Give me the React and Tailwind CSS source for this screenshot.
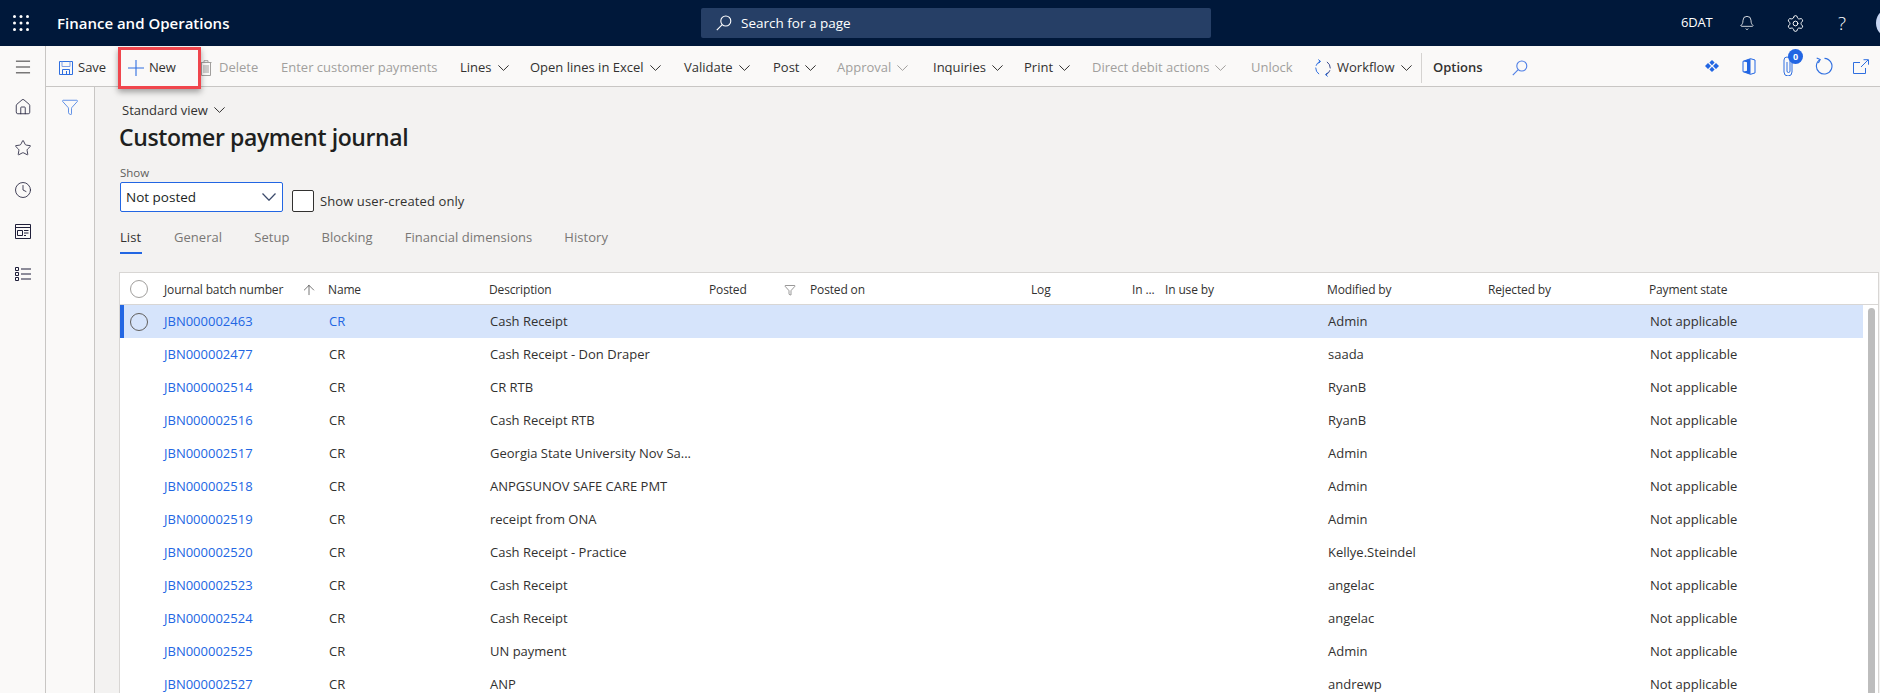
import React from "react";
import { Bell, Settings, Home, Star, Clock, Funnel, ArrowUp, Menu } from "lucide-react";

const Chev = ({ c = "#323130", w = 11, h = 6 }) => (
  <svg width={w} height={h} viewBox="0 0 11 6" fill="none" stroke={c} strokeWidth="1" preserveAspectRatio="none" className="ml-[6px] shrink-0">
    <path d="M.4.4 5.5 5.4 10.6.4" />
  </svg>
);

const SaveIcon = () => (
  <svg width="16" height="16" viewBox="0 0 16 16" fill="none" stroke="#2f6fe0" strokeWidth="1">
    <path d="M1.5 1.5h13v13h-13z" />
    <path d="M4 1.5v5h8v-5" stroke="#7f9fe6" />
    <path d="M4.5 14.5v-5h7v5M8.5 11v3.5" />
  </svg>
);
const TrashIcon = () => (
  <svg width="12" height="16" viewBox="0 0 12 16" fill="none" stroke="#a19f9d" strokeWidth="1">
    <path d="M.5 2.5h11M4 2.5V.7h4v1.8M1.5 2.5v13h9v-13M4 5v8M6 5v8M8 5v8" />
  </svg>
);
const WorkflowIcon = () => (
  <svg width="18" height="18" viewBox="0 0 18 18" fill="none" stroke="#2f6fe0" strokeWidth="1" strokeLinecap="round">
    <path d="M5.6 2.4A7.3 7.3 0 0 0 2.2 6.4M1.7 9a7.3 7.3 0 0 0 3 5.9" />
    <path d="M12.4 15.6a7.3 7.3 0 0 0 3.4-4M16.3 9a7.3 7.3 0 0 0-3-5.9" stroke="#3a4a8c" />
    <path d="M4.6.8 6.6 2.4 4.8 4.2M13.4 17.2l-2-1.6 1.8-1.8" />
  </svg>
);
const PanelIcon = () => (
  <svg width="16" height="15" viewBox="0 0 16 15" fill="none" stroke="#1f1f3a" strokeWidth="1">
    <path d="M.5.5h15v14H.5zM.5 3.5h15M2.5 6.5h5v5h-5zM9 6.5h4.5M9 9h4.5M9 11.5h2" />
  </svg>
);
const ListIcon = () => (
  <svg width="16" height="16" viewBox="0 0 16 16" fill="none" stroke="#1f1f3a" strokeWidth="1">
    <path d="M.5 1.5h3v3h-3zM.5 6.5h3v3h-3zM.5 11.5h3v3h-3zM6 3h10M6 8h10M6 13h10" />
  </svg>
);
const DotsIcon = () => (
  <svg width="16" height="16" viewBox="0 0 16 16" fill="#fff">
    {[1.5, 8, 14.5].flatMap((y) => [1.5, 8, 14.5].map((x) => <circle key={`${x}-${y}`} cx={x} cy={y} r="1.5" />))}
  </svg>
);
const SearchFlip = ({ c = "#fff", s = 16 }) => (
  <svg width={s} height={s} viewBox="0 0 16 16" fill="none" stroke={c} strokeWidth="1.1">
    <circle cx="9.8" cy="6" r="5" />
    <path d="M6.2 9.6.8 15.2" />
  </svg>
);
const Diamonds = () => (
  <svg width="14" height="12" viewBox="0 0 14 12" fill="#2266e3">
    <path d="M3 3l3 3-3 3-3-3zM11 3l3 3-3 3-3-3zM7 0l2.6 2.6L7 5.2 4.4 2.6zM7 6.8l2.6 2.6L7 12 4.4 9.4z" />
  </svg>
);
const OfficeIcon = () => (
  <svg width="14" height="17" viewBox="0 0 14 17" fill="none">
    <path d="M8.5.7 1 3.3v10.4l7.5 2.6 4.5-1.4V2z" stroke="#2266e3" />
    <path d="M8.5.7v15.6L1 13.7 5 12.7V4.3L1 3.3z" fill="#2266e3" />
  </svg>
);
const ClipIcon = () => (
  <svg width="10" height="20" viewBox="0 0 10 20" fill="none" stroke="#2f6fe0" strokeWidth="1">
    <path d="M9 5v11a4 4 0 0 1-8 0V4a3 3 0 0 1 6 0v11a1.5 1.5 0 0 1-3 0V6" />
  </svg>
);
const RefreshIcon = () => (
  <svg width="18" height="18" viewBox="0 0 18 18" fill="none" stroke="#2f6fe0" strokeWidth="1.1">
    <path d="M5 2.6A7.8 7.8 0 1 0 9.5 1.4" />
    <path d="M1.7 .9 5.2 2.6 3.4 6" />
  </svg>
);
const OpenIcon = () => (
  <svg width="16" height="15" viewBox="0 0 16 15" fill="none" stroke="#2f6fe0" strokeWidth="1">
    <path d="M7 3.5H.5v11h12V9M8 8l7-7M10.5.7h5v5" />
  </svg>
);
const NewPlus = () => (
  <svg width="16" height="16" viewBox="0 0 16 16" stroke="#2f6fe0" strokeWidth="1.1">
    <path d="M8 0v16M0 8h16" />
  </svg>
);

const Tool = ({ w, dis, children }) => (
  <div className={`${w} flex items-center shrink-0 whitespace-nowrap ${dis ? "text-[#a19f9d]" : "text-[#323130]"}`}>{children}</div>
);

const rows = [
  ["JBN000002463", "Cash Receipt", "Admin"],
  ["JBN000002477", "Cash Receipt - Don Draper", "saada"],
  ["JBN000002514", "CR RTB", "RyanB"],
  ["JBN000002516", "Cash Receipt RTB", "RyanB"],
  ["JBN000002517", "Georgia State University Nov Sa...", "Admin"],
  ["JBN000002518", "ANPGSUNOV SAFE CARE PMT", "Admin"],
  ["JBN000002519", "receipt from ONA", "Admin"],
  ["JBN000002520", "Cash Receipt - Practice", "Kellye.Steindel"],
  ["JBN000002523", "Cash Receipt", "angelac"],
  ["JBN000002524", "Cash Receipt", "angelac"],
  ["JBN000002525", "UN payment", "Admin"],
  ["JBN000002527", "ANP", "andrewp"],
];

const cols = "grid grid-cols-[44px_164px_161px_220px_101px_221px_101px_33px_162px_161px_161px_1fr]";

export default function App() {
  return (
    <div className="h-[693px] w-[1880px] overflow-hidden flex flex-col bg-[#f3f2f1] font-['Open_Sans','Noto_Sans',sans-serif] text-[13px] text-[#323130]">
      <header className="h-[46px] shrink-0 bg-[#00183a] flex items-center text-white overflow-hidden">
        <div className="w-[57px] pl-[13px] flex items-center shrink-0"><DotsIcon /></div>
        <div className="w-[644px] shrink-0 text-[15px] font-semibold">Finance and Operations</div>
        <div className="w-[510px] shrink-0 h-[30px] rounded-[2px] bg-[#263f66] flex items-center pl-[15px] gap-[9px] text-[13.5px]">
          <SearchFlip />
          <span>Search for a page</span>
        </div>
        <div className="ml-[470px] w-[58px] shrink-0 text-[13px] tracking-[-0.2px]">6DAT</div>
        <Bell size={16} strokeWidth={1.2} className="shrink-0" />
        <Settings size={19} strokeWidth={1.2} className="ml-[31px] shrink-0" />
        <span className="ml-[33px] text-[19px] font-light leading-none w-[10px] shrink-0">?</span>
        <div className="ml-[28px] w-[30px] h-[30px] rounded-full bg-[#c7d6f2] shrink-0" />
      </header>

      <div className="flex-1 flex min-h-0">
        <nav className="w-[46px] shrink-0 bg-[#faf9f8] border-r border-[#c8c6c4] flex flex-col items-center">
          <Menu size={20} strokeWidth={1} color="#111" className="mt-[11px]" />
          <Home size={18} strokeWidth={1.1} color="#1f1f3a" className="mt-[21px]" />
          <Star size={18} strokeWidth={1.1} color="#1f1f3a" className="mt-[23px]" />
          <Clock size={18} strokeWidth={1.1} color="#1f1f3a" className="mt-[24px]" />
          <div className="mt-[25px] flex"><PanelIcon /></div>
          <div className="mt-[27px] flex"><ListIcon /></div>
        </nav>

        <div className="flex-1 flex flex-col min-w-0">
          <div className="h-[41px] shrink-0 bg-[#faf9f8] border-b border-[#c8c6c4] flex items-center pl-[12px] pt-[3px] text-[13px]">
            <Tool w="w-[70px]"><SaveIcon /><span className="ml-[4px]">Save</span></Tool>
            <Tool w="w-[72px]">
              <div className="relative flex items-center">
                <NewPlus /><span className="ml-[5px] tracking-[-0.2px]">New</span>
                <div className="absolute left-[-10px] top-[-11px] w-[83px] h-[42px] border-[3px] border-[#f0464d] shadow-[0_3px_6px_rgba(0,0,0,0.35)]" />
              </div>
            </Tool>
            <Tool w="w-[81px]" dis><TrashIcon /><span className="ml-[7px]">Delete</span></Tool>
            <Tool w="w-[179px]" dis>Enter customer payments</Tool>
            <Tool w="w-[70px]">Lines<Chev /></Tool>
            <Tool w="w-[154px]">Open lines in Excel<Chev /></Tool>
            <Tool w="w-[89px]">Validate<Chev /></Tool>
            <Tool w="w-[64px]">Post<Chev /></Tool>
            <Tool w="w-[96px]" dis>Approval<Chev c="#a19f9d" /></Tool>
            <Tool w="w-[91px]">Inquiries<Chev /></Tool>
            <Tool w="w-[68px]">Print<Chev /></Tool>
            <Tool w="w-[159px]" dis>Direct debit actions<Chev c="#a19f9d" /></Tool>
            <Tool w="w-[63px]" dis>Unlock</Tool>
            <Tool w="w-[107px]"><WorkflowIcon /><span className="ml-[5px]">Workflow</span><Chev /></Tool>
            <div className="w-px h-[30px] bg-[#d5d3d1] shrink-0" />
            <div className="ml-[11px] w-[79px] font-semibold shrink-0">Options</div>
            <SearchFlip c="#4f7fe6" />
            <div className="ml-auto flex items-center pr-[11px] -mt-[3px]">
              <Diamonds />
              <div className="ml-[23px] flex"><OfficeIcon /></div>
              <div className="ml-[27px] relative flex w-[10px]">
                <ClipIcon />
                <div className="absolute left-[5px] top-[-7px] w-[15px] h-[15px] rounded-full bg-[#2266e3] text-white text-[9px] font-bold flex items-center justify-center">0</div>
              </div>
              <div className="ml-[22px] flex"><RefreshIcon /></div>
              <div className="ml-[20px] flex"><OpenIcon /></div>
            </div>
          </div>

          <div className="flex-1 flex min-h-0">
            <div className="w-[49px] shrink-0 bg-[#faf9f8] border-r border-[#c8c6c4] flex justify-center pt-[11px]">
              <Funnel size={18} strokeWidth={1} color="#2f6fe0" />
            </div>
            <main className="flex-1 min-w-0 pl-[24px]">
              <div className="h-[36px] pt-[10px] pl-[3px] flex items-center text-[13px] leading-[18px]">
                <span>Standard view</span><Chev />
              </div>
              <h1 className="h-[43px] text-[23px] leading-[30px] font-semibold tracking-[-0.4px] text-[#201f1e] -mt-[1px]">Customer payment journal</h1>
              <div className="h-[15px] pl-[1px] text-[11.5px] leading-[15px] text-[#605e5c]">Show</div>
              <div className="flex items-start mt-[2px] pl-[1px]">
                <div className="w-[163px] h-[30px] bg-white border border-[#2266e3] rounded-[2px] flex items-center pl-[5px] pr-[6px] justify-between text-[13.5px] text-[#201f1e]">
                  <span>Not posted</span><Chev c="#3b4a6b" w={14} h={8} />
                </div>
                <div className="ml-[9px] mt-[8px] w-[22px] h-[22px] bg-white border border-[#323130] rounded-[2px]" />
                <div className="ml-[6px] mt-[10px] text-[13px] leading-[18px] tracking-[0.1px]">Show user-created only</div>
              </div>
              <div className="flex mt-[16px] h-[26px] text-[13px] tracking-[0.05px] text-[#797775] pl-[1px] gap-[32px]">
                <div className="text-[#323130] border-b-[2px] border-[#2266e3] h-[26px] w-[22px]">List</div>
                <div>General</div>
                <div>Setup</div>
                <div>Blocking</div>
                <div>Financial dimensions</div>
                <div>History</div>
              </div>
              <section className="mt-[18px] bg-white border border-[#d8d6d4] border-b-0 relative w-[1760px]">
                <div className={`${cols} h-[32px] pt-[2px] items-center border-b border-[#d8d6d4] text-[12px] tracking-[-0.15px]`}>
                  <div className="pl-[10px]"><div className="w-[18px] h-[18px] rounded-full border border-[#a19f9d] -mt-[2px]" /></div>
                  <div className="flex items-center"><span>Journal batch number</span><ArrowUp size={16} strokeWidth={1} className="ml-[18px]" /></div>
                  <div>Name</div>
                  <div>Description</div>
                  <div>Posted</div>
                  <div className="relative">Posted on<Funnel size={12} strokeWidth={1} className="absolute left-[-26px] top-[3px]" /></div>
                  <div>Log</div>
                  <div>In ...</div>
                  <div>In use by</div>
                  <div>Modified by</div>
                  <div>Rejected by</div>
                  <div>Payment state</div>
                </div>
                {rows.map(([id, desc, by], i) => (
                  <div key={id} className={`${cols} h-[33px] pt-[1px] items-center text-[13px] w-[1743px] ${i === 0 ? "bg-[#d6e4fb] border-l-[4px] border-[#2266e3]" : ""}`}>
                    <div className={i === 0 ? "pl-[6px]" : "pl-[10px]"}>
                      {i === 0 && <div className="w-[18px] h-[18px] rounded-full border border-[#605e5c] -mt-[1px]" />}
                    </div>
                    <div className={`text-[#2266e3] ${i === 0 ? "-ml-[4px]" : ""}`}>{id}</div>
                    <div className={`pl-[1px] ${i === 0 ? "text-[#2266e3] -ml-[4px]" : ""}`}>CR</div>
                    <div className={`pl-[1px] whitespace-nowrap ${i === 0 ? "-ml-[4px]" : ""}`}>{desc}</div>
                    <div /><div /><div /><div /><div />
                    <div className={`pl-[1px] ${i === 0 ? "-ml-[4px]" : ""}`}>{by}</div>
                    <div />
                    <div className={`pl-[1px] ${i === 0 ? "-ml-[4px]" : ""}`}>Not applicable</div>
                  </div>
                ))}
                <div className="absolute left-[1748px] top-[35px] w-[7px] h-[400px] rounded-[4px] bg-[#bdbdbd]" />
              </section>
            </main>
          </div>
        </div>
      </div>
    </div>
  );
}
